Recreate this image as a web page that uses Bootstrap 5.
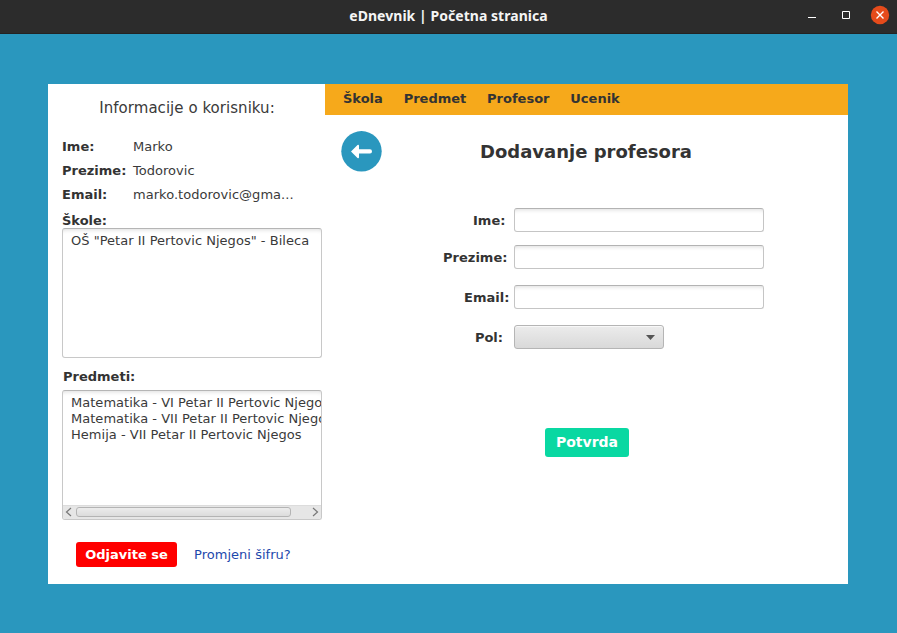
<!DOCTYPE html>
<html lang="bs">
<head>
<meta charset="utf-8">
<meta name="viewport" content="width=device-width, initial-scale=1">
<title>eDnevnik | Početna stranica</title>
<link href="https://cdn.jsdelivr.net/npm/bootstrap@5.3.0/dist/css/bootstrap.min.css" rel="stylesheet">
<style>
  body { background: #2a97be; color: #3a3a3a; font: 13px/16px "DejaVu Sans", sans-serif; height: 633px; }
  b, label { color: #333; }
  .titlebar { height: 34px; background: #2c2c2c; border-bottom: 1px solid #232323; }
  .titlebar-side { width: 98px; }
  .window-title { color: #f5f5f5; font: 700 14px/32px "Noto Sans", "Open Sans", sans-serif; letter-spacing: .04px; }
  .app { width: 800px; height: 500px; margin: 50px 0 0 48px; }
  .side { width: 277px; padding: 15px 3px 0 14px; }
  .side-title { color: #3a3a3a; font-size: 15px; line-height: 18px; margin: 0 10px 18px 0; letter-spacing: .04px; }
  .info-row { height: 24px; letter-spacing: .03px; }
  .info-key { width: 71px; letter-spacing: 0; }
  .listing { width: 260px; height: 130px; border: 1px solid #c8c8c8; border-top-color: #b5b5b5; border-radius: 3px; box-shadow: inset 0 5px 4px -4px #ddd; }
  .listing-items { padding: 4px 0 0 8px; letter-spacing: .025px; }
  .label-schools { height: 21px; padding-top: 6px; }
  .label-subjects { height: 32px; padding: 11px 0 0 1px; }
  .hscroll { height: 14px; background: #e6e6e6; border-top: 1px solid #dcdcdc; padding: 0 2px 1px; }
  .hscroll-thumb { width: 215px; height: 10px; border: 1px solid #b4b4b4; border-radius: 3px; background: linear-gradient(#ececec, #dcdcdc); margin-left: 3px; }
  .side-actions { padding: 22px 0 0 14px; }
  .flat-btn { border: 0; border-radius: 3px; color: #fff; font-weight: 700; padding: 0; }
  .btn-logout { width: 101px; height: 25px; background: #f00; font-size: 13px; line-height: 25px; }
  .btn-confirm { width: 84px; height: 29px; background: #09d8a2; font-size: 14px; line-height: 28px; padding-bottom: 1px; margin: 79px 0 0 220px; }
  .pw-link { color: #1d48ac; margin-left: 17px; letter-spacing: .03px; }
  .menu { height: 31px; background: #f6a91b; padding: 0 0 2px 18px; gap: 20.800px; }
  .menu a { color: #333; }
  .main-head { height: 41px; margin: 16px 0 0 16px; }
  .page-title { color: #333; font-size: 18px; line-height: 22px; margin-left: 98px; }
  .form-rows { padding-top: 36px; }
  .field { height: 24px; }
  .field label { width: 189px; text-align: right; padding-top: 1px; }
  .text-field { width: 250px; height: 24px; border: 1px solid #c5c5c5; border-top-color: #b3b3b3; border-radius: 3px; box-shadow: inset 0 5px 4px -4px #ddd; padding: 0 7px; outline: 0; }
  .combo { width: 150px; height: 24px; border: 1px solid #b5b5b5; border-radius: 3px; background: linear-gradient(#ececec, #d9d9d9); box-shadow: inset 0 1px 0 #f8f8f8; padding: 0 8px; }
  .gap-name { margin-bottom: 13px; }
  .gap-row { margin-bottom: 16px; }
  .field .pe-name { padding-right: 8.600px; }
  .field .pe-surname { padding-right: 6.600px; }
  .field .pe-email { padding-right: 4.600px; }
  .field .pe-gender { padding-right: 11px; }
</style>
</head>
<body>
<header class="titlebar d-flex justify-content-between">
  <div class="titlebar-side"></div>
  <div class="window-title">eDnevnik | Početna stranica</div>
  <div class="titlebar-side">
    <svg class="d-block" width="98" height="33" fill="none" stroke="#fff">
      <path d="M9 17.500h8"/>
      <path d="M43.500 11.500h7v7h-7z"/>
      <circle cx="81" cy="15" r="9.200" fill="#e54b1b" stroke="none"/>
      <path d="M77.500 11.500l7 7m0-7l-7 7" stroke-width="1.400"/>
    </svg>
  </div>
</header>

<div class="app bg-white d-flex">
  <aside class="side flex-shrink-0">
    <h1 class="side-title fw-normal text-center">Informacije o korisniku:</h1>
    <div class="info-row d-flex align-items-center"><b class="info-key">Ime:</b><span>Marko</span></div>
    <div class="info-row d-flex align-items-center"><b class="info-key">Prezime:</b><span>Todorovic</span></div>
    <div class="info-row d-flex align-items-center"><b class="info-key">Email:</b><span>marko.todorovic@gma...</span></div>
    <b class="label-schools d-block">Škole:</b>
    <div class="listing">
      <div class="listing-items">OŠ "Petar II Pertovic Njegos" - Bileca</div>
    </div>
    <b class="label-subjects d-block">Predmeti:</b>
    <div class="listing d-flex flex-column justify-content-between overflow-hidden">
      <div class="listing-items text-nowrap">
        <div>Matematika - VI Petar II Pertovic Njegos</div>
        <div>Matematika - VII Petar II Pertovic Njegos</div>
        <div>Hemija - VII Petar II Pertovic Njegos</div>
      </div>
      <div class="hscroll d-flex align-items-center flex-shrink-0">
        <svg width="8" height="10" fill="none" stroke="#777" stroke-width="1.200"><path d="M6 1L1.500 5L6 9"/></svg>
        <div class="hscroll-thumb"></div>
        <svg class="ms-auto" width="8" height="10" fill="none" stroke="#777" stroke-width="1.200"><path d="M2 1L6.500 5L2 9"/></svg>
      </div>
    </div>
    <div class="side-actions d-flex align-items-center">
      <button class="btn flat-btn btn-logout" type="button">Odjavite se</button>
      <a class="pw-link text-decoration-none" href="#">Promjeni šifru?</a>
    </div>
  </aside>

  <main class="flex-grow-1">
    <nav class="menu d-flex align-items-center fw-bold">
      <a class="text-decoration-none" href="#">Škola</a>
      <a class="text-decoration-none" href="#">Predmet</a>
      <a class="text-decoration-none" href="#">Profesor</a>
      <a class="text-decoration-none" href="#">Ucenik</a>
    </nav>
    <div class="main-head d-flex align-items-center">
      <svg width="41" height="41" viewBox="0 0 41 41">
        <circle cx="20.500" cy="20.300" r="20.200" fill="#2a97be"/>
        <path d="M10 20.500L16.500 14Q18 13.200 18 15V18.300H29Q31 18.300 31 20.400T29 22.500H18V26Q18 27.800 16.500 27Z" fill="#fff"/>
      </svg>
      <h2 class="page-title fw-bold mb-0">Dodavanje profesora</h2>
    </div>
    <form class="form-rows">
      <div class="field gap-name d-flex align-items-center"><label class="pe-name fw-bold" for="ime">Ime:</label><input class="text-field" id="ime" type="text"></div>
      <div class="field gap-row d-flex align-items-center"><label class="pe-surname fw-bold" for="prezime">Prezime:</label><input class="text-field" id="prezime" type="text"></div>
      <div class="field gap-row d-flex align-items-center"><label class="pe-email fw-bold" for="email">Email:</label><input class="text-field" id="email" type="text"></div>
      <div class="field d-flex align-items-center"><label class="pe-gender fw-bold" for="pol">Pol:</label>
        <div class="combo d-flex align-items-center justify-content-end" id="pol" role="combobox" tabindex="0">
          <svg width="9" height="5"><path d="M0 0H9L4.500 5Z" fill="#555"/></svg>
        </div>
      </div>
      <button class="btn flat-btn btn-confirm d-block" type="button">Potvrda</button>
    </form>
  </main>
</div>
<script src="https://cdn.jsdelivr.net/npm/bootstrap@5.3.0/dist/js/bootstrap.bundle.min.js"></script>
</body>
</html>
